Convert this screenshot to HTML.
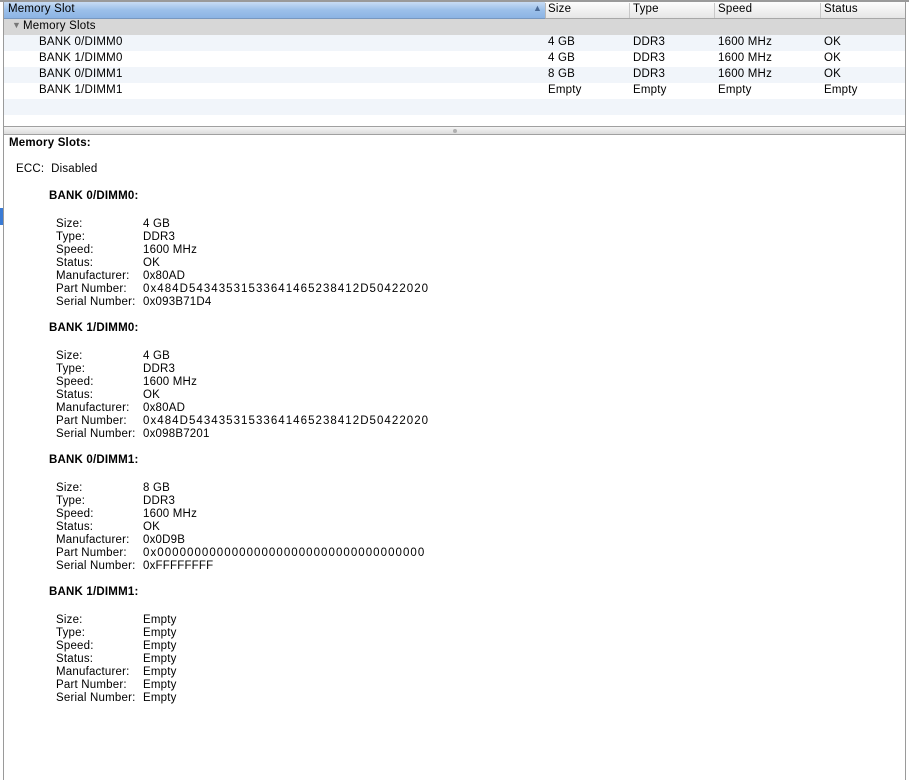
<!DOCTYPE html>
<html><head><meta charset="utf-8"><style>
*{margin:0;padding:0;box-sizing:border-box}
body{width:909px;height:780px;background:#fff;position:relative;overflow:hidden;font-family:"Liberation Sans",sans-serif;font-size:11.5px;color:#000;letter-spacing:0.2px}
.a{position:absolute;white-space:nowrap}
.b{font-weight:bold}
</style></head><body>
<div class="a" style="left:0;top:0;width:909px;height:2px;background:#9a9a9a"></div>
<div class="a" style="left:3px;top:0;width:1px;height:780px;background:#9a9a9a"></div>
<div class="a" style="left:905px;top:0;width:1px;height:780px;background:#9a9a9a"></div>
<div class="a" style="left:0;top:208px;width:3px;height:17px;background:#3a7bd5"></div>
<!-- header -->
<div class="a" style="left:4px;top:2px;width:901px;height:17px;background:linear-gradient(#fdfdfd,#e6e6e6);border-bottom:1px solid #a8a8a8"></div>
<div class="a" style="left:4px;top:2px;width:541px;height:17px;background:linear-gradient(#c8dcf4,#9cc0ea 50%,#8cb4e4);border-bottom:1px solid #7898c0"></div>
<div class="a" style="left:8px;top:3px">Memory Slot</div>
<div class="a" style="left:533px;top:3px;font-size:9px;color:#4a6a96">▲</div>
<div class="a" style="left:545px;top:3px;width:1px;height:15px;background:#b8b8b8"></div>
<div class="a" style="left:629px;top:3px;width:1px;height:15px;background:#c8c8c8"></div>
<div class="a" style="left:714px;top:3px;width:1px;height:15px;background:#c8c8c8"></div>
<div class="a" style="left:820px;top:3px;width:1px;height:15px;background:#c8c8c8"></div>
<div class="a" style="left:548px;top:3px">Size</div>
<div class="a" style="left:633px;top:3px">Type</div>
<div class="a" style="left:718px;top:3px">Speed</div>
<div class="a" style="left:824px;top:3px">Status</div>
<!-- rows -->
<div class="a" style="left:4px;top:19px;width:901px;height:16px;background:#d7d7d7"></div>
<div class="a" style="left:12px;top:20px;font-size:9px;color:#777">▼</div>
<div class="a" style="left:23px;top:20px">Memory Slots</div>
<div class="a" style="left:4px;top:35px;width:901px;height:16px;background:#f1f5fa"></div>
<div class="a" style="left:4px;top:67px;width:901px;height:16px;background:#f1f5fa"></div>
<div class="a" style="left:4px;top:99px;width:901px;height:16px;background:#f1f5fa"></div>
<div class="a" style="left:39px;top:36px">BANK 0/DIMM0</div><div class="a" style="left:548px;top:36px">4 GB</div><div class="a" style="left:633px;top:36px">DDR3</div><div class="a" style="left:718px;top:36px">1600 MHz</div><div class="a" style="left:824px;top:36px">OK</div>
<div class="a" style="left:39px;top:52px">BANK 1/DIMM0</div><div class="a" style="left:548px;top:52px">4 GB</div><div class="a" style="left:633px;top:52px">DDR3</div><div class="a" style="left:718px;top:52px">1600 MHz</div><div class="a" style="left:824px;top:52px">OK</div>
<div class="a" style="left:39px;top:68px">BANK 0/DIMM1</div><div class="a" style="left:548px;top:68px">8 GB</div><div class="a" style="left:633px;top:68px">DDR3</div><div class="a" style="left:718px;top:68px">1600 MHz</div><div class="a" style="left:824px;top:68px">OK</div>
<div class="a" style="left:39px;top:84px">BANK 1/DIMM1</div><div class="a" style="left:548px;top:84px">Empty</div><div class="a" style="left:633px;top:84px">Empty</div><div class="a" style="left:718px;top:84px">Empty</div><div class="a" style="left:824px;top:84px">Empty</div>
<!-- splitter -->
<div class="a" style="left:4px;top:126px;width:901px;height:9px;background:linear-gradient(#f4f4f4,#dcdcdc);border-top:1px solid #a0a0a0;border-bottom:1px solid #a0a0a0"></div>
<div class="a" style="left:453px;top:129px;width:4px;height:4px;border-radius:2px;background:#b0b0b0"></div>
<!-- detail -->
<div class="a b" style="left:9px;top:137px">Memory Slots:</div>
<div class="a" style="left:16px;top:163px">ECC:&nbsp; Disabled</div>
<div id="d"></div>
<script>
var s=[["BANK 0/DIMM0:",["4 GB","DDR3","1600 MHz","OK","0x80AD","0x484D5434353153364146523841 2D50422020".replace(' ',''),"0x093B71D4"]],
["BANK 1/DIMM0:",["4 GB","DDR3","1600 MHz","OK","0x80AD","0x484D54343531533641465238412D50422020","0x098B7201"]],
["BANK 0/DIMM1:",["8 GB","DDR3","1600 MHz","OK","0x0D9B","0x000000000000000000000000000000000000","0xFFFFFFFF"]],
["BANK 1/DIMM1:",["Empty","Empty","Empty","Empty","Empty","Empty","Empty"]]];
var L=["Size:","Type:","Speed:","Status:","Manufacturer:","Part Number:","Serial Number:"];
var h="";
s.forEach(function(x,i){var t=190+i*132;
h+='<div class="a b" style="left:49px;top:'+t+'px">'+x[0]+'</div>';
L.forEach(function(l,j){var y=t+28+j*13;
h+='<div class="a" style="left:56px;top:'+y+'px">'+l+'</div><div class="a" style="left:143px;top:'+y+'px;'+(j==5&&x[1][j].length>10?'letter-spacing:1.05px':'')+'">'+x[1][j]+'</div>';});});
document.getElementById('d').innerHTML=h;
</script>
</body></html>
